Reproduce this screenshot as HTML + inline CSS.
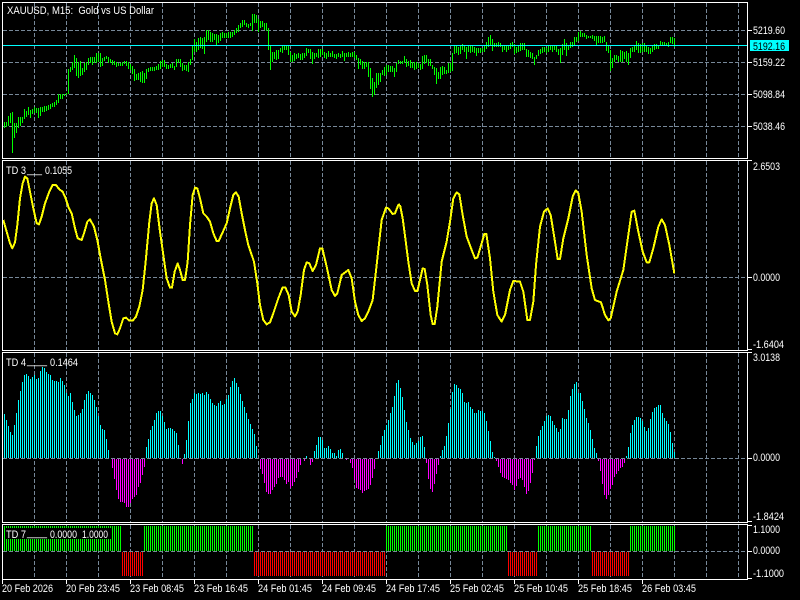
<!DOCTYPE html>
<html>
<head>
<meta charset="utf-8">
<title>XAUUSD, M15</title>
<style>
html,body{margin:0;padding:0;background:#000;width:800px;height:600px;overflow:hidden}
svg{display:block;position:absolute;left:0;top:0}
text{font-family:"Liberation Sans",sans-serif;font-size:11px;fill:#fff;white-space:pre}
</style>
</head>
<body>
<svg width="800" height="600" viewBox="0 0 800 600" xmlns="http://www.w3.org/2000/svg">
<rect width="800" height="600" fill="#000"/>
<path id="grid" stroke="#778899" stroke-width="1" stroke-dasharray="4 2" fill="none" shape-rendering="crispEdges"/>
<path id="histp" fill="none" shape-rendering="crispEdges" stroke="#00ffff" stroke-width="1"/>
<path id="histn" fill="none" shape-rendering="crispEdges" stroke="#ff00ff" stroke-width="1"/>
<path id="sg" fill="none" shape-rendering="crispEdges" stroke="#00ff00" stroke-width="1"/>
<path id="sr" fill="none" shape-rendering="crispEdges" stroke="#ff0000" stroke-width="1"/>
<path id="price" fill="none" shape-rendering="crispEdges" stroke="#00ff00" stroke-width="1"/>
<path d="M3 45.5H747" stroke="#00ffff" stroke-width="1" shape-rendering="crispEdges"/>
<g fill="none" stroke="#ffff00" stroke-width="6" stroke-linejoin="round" shape-rendering="crispEdges">
<polyline transform="translate(0 155) scale(.33333)" points="10,195 20,230 30,265 37,280 45,262 52,210 60,130 68,85 75,65 82,70 90,110 100,160 110,205 117,208 125,185 135,145 148,110 158,90 168,90 178,103 188,110 197,130 205,155 215,175 225,220 233,250 245,255 252,235 262,200 270,193 282,215 292,255 302,310 315,375 325,440 335,500 345,535 352,538 360,520 370,490 378,488 388,497 398,497 408,485 418,455 428,405 437,320 448,200 455,145 462,130 470,150 480,230 490,300 500,370 510,398 516,398 524,350 533,325 540,345 548,375 555,375 563,320 570,210 578,120 585,98 592,100 600,130 610,175 620,185 630,200 640,235 650,258 656,258 668,232 680,205 690,160 700,120 708,112 716,125 725,175 735,225 745,270 762,320 772,385 780,450 790,495 800,508 810,502 820,475 835,430 848,397 856,397 866,420 875,470 885,484 893,470 902,420 912,345 920,322 928,325 938,348 948,330 960,280 967,280 980,335 995,405 1005,423 1012,415 1025,360 1045,345 1055,370 1065,440 1075,480 1085,498 1095,490 1105,470 1118,435 1130,330 1145,195 1158,158 1165,160 1178,177 1185,175 1195,150 1200,148"/>
<polyline transform="translate(400 155) scale(.33333)" points="0,150 8,190 16,250 25,320 35,385 45,408 52,408 60,375 68,340 74,342 82,390 92,480 98,507 104,507 112,455 125,320 140,260 150,200 160,130 170,112 178,118 188,180 200,245 215,285 225,310 232,308 245,265 253,237 259,237 270,310 280,410 292,480 305,500 315,480 330,405 340,378 360,380 370,410 382,495 390,495 400,440 408,330 420,215 432,170 443,160 452,180 465,260 473,312 480,312 490,250 505,190 518,125 527,106 535,115 545,170 560,300 575,400 585,435 603,442 615,480 625,496 632,490 650,410 670,345 685,240 695,170 703,167 715,230 728,290 740,322 748,322 760,280 775,215 785,193 795,210 808,270 823,355"/>
</g>
<g fill="none" stroke="#fff" stroke-width="1" shape-rendering="crispEdges">
<rect x="2.5" y="2.5" width="745" height="156"/>
<rect x="2.5" y="160.5" width="745" height="190"/>
<rect x="2.5" y="352.5" width="745" height="170"/>
<rect x="2.5" y="524.5" width="745" height="55"/>
<path d="M747 30.500H752M747 62.500H752M747 94.500H752M747 126.500H752M747 160.500H752M747 277.500H752M747 349.500H752M747 352.500H752M747 458.500H752M747 521.500H752M747 525.500H752M747 551.500H752M747 578.500H752M2.500 579V584M66.500 579V584M130.500 579V584M194.500 579V584M258.500 579V584M322.500 579V584M386.500 579V584M450.500 579V584M514.500 579V584M578.500 579V584M642.500 579V584"/>
</g>
<rect x="750" y="40" width="39" height="11" fill="#00ffff"/>
<rect x="5" y="528" width="106" height="11" fill="#000"/>
<text x="7" y="14" textLength="147" lengthAdjust="spacingAndGlyphs">XAUUSD, M15:  Gold vs US Dollar</text>
<text x="6" y="174" textLength="20" lengthAdjust="spacingAndGlyphs">TD 3</text>
<text x="27" y="173" textLength="15" lengthAdjust="spacingAndGlyphs">___</text>
<text x="45" y="174" textLength="27" lengthAdjust="spacingAndGlyphs">0.1055</text>
<text x="6" y="366" textLength="20" lengthAdjust="spacingAndGlyphs">TD 4</text>
<text x="27" y="364" textLength="20" lengthAdjust="spacingAndGlyphs">____</text>
<text x="50" y="366" textLength="28" lengthAdjust="spacingAndGlyphs">0.1464</text>
<text x="6" y="538" textLength="20" lengthAdjust="spacingAndGlyphs">TD 7</text>
<text x="27" y="536" textLength="20" lengthAdjust="spacingAndGlyphs">____</text>
<text x="50" y="538" textLength="27" lengthAdjust="spacingAndGlyphs">0.0000</text>
<text x="82" y="538" textLength="26" lengthAdjust="spacingAndGlyphs">1.0000</text>
<g>
<text x="753" y="34" textLength="32" lengthAdjust="spacingAndGlyphs">5219.60</text>
<text x="753" y="50" textLength="32" lengthAdjust="spacingAndGlyphs" style="fill:#000">5192.16</text>
<text x="753" y="66" textLength="32" lengthAdjust="spacingAndGlyphs">5159.22</text>
<text x="753" y="98" textLength="32" lengthAdjust="spacingAndGlyphs">5098.84</text>
<text x="753" y="130" textLength="32" lengthAdjust="spacingAndGlyphs">5038.46</text>
<text x="753" y="170" textLength="27" lengthAdjust="spacingAndGlyphs">2.6503</text>
<text x="753" y="281" textLength="27" lengthAdjust="spacingAndGlyphs">0.0000</text>
<text x="753" y="348" textLength="31" lengthAdjust="spacingAndGlyphs">-1.6404</text>
<text x="753" y="361" textLength="27" lengthAdjust="spacingAndGlyphs">3.0138</text>
<text x="753" y="461" textLength="27" lengthAdjust="spacingAndGlyphs">0.0000</text>
<text x="753" y="520" textLength="31" lengthAdjust="spacingAndGlyphs">-1.8424</text>
<text x="753" y="533" textLength="27" lengthAdjust="spacingAndGlyphs">1.1000</text>
<text x="753" y="554" textLength="27" lengthAdjust="spacingAndGlyphs">0.0000</text>
<text x="753" y="577" textLength="31" lengthAdjust="spacingAndGlyphs">-1.1000</text>
</g>
<g>
<text x="2" y="592" textLength="51" lengthAdjust="spacingAndGlyphs">20 Feb 2026</text>
<text x="66" y="592" textLength="54" lengthAdjust="spacingAndGlyphs">20 Feb 23:45</text>
<text x="130" y="592" textLength="54" lengthAdjust="spacingAndGlyphs">23 Feb 08:45</text>
<text x="194" y="592" textLength="54" lengthAdjust="spacingAndGlyphs">23 Feb 16:45</text>
<text x="258" y="592" textLength="54" lengthAdjust="spacingAndGlyphs">24 Feb 01:45</text>
<text x="322" y="592" textLength="54" lengthAdjust="spacingAndGlyphs">24 Feb 09:45</text>
<text x="386" y="592" textLength="54" lengthAdjust="spacingAndGlyphs">24 Feb 17:45</text>
<text x="450" y="592" textLength="54" lengthAdjust="spacingAndGlyphs">25 Feb 02:45</text>
<text x="514" y="592" textLength="54" lengthAdjust="spacingAndGlyphs">25 Feb 10:45</text>
<text x="578" y="592" textLength="54" lengthAdjust="spacingAndGlyphs">25 Feb 18:45</text>
<text x="642" y="592" textLength="54" lengthAdjust="spacingAndGlyphs">26 Feb 03:45</text>
</g>
</svg>
<script>
(function(){
var g='';
var vx=[34,66,98,130,162,194,226,258,290,322,354,386,418,450,482,514,546,578,610,642,674,706,738];
var pn=[[3,158],[161,350],[353,522],[525,579]];
pn.forEach(function(p){vx.forEach(function(x){g+='M'+(x+.5)+' '+p[0]+'V'+p[1];});});
[30,62,94,126,277,458,551].forEach(function(y){g+='M3 '+(y+.5)+'H747';});
document.getElementById('grid').setAttribute('d',g);

var h=[192,210,228,246,255,225,188,150,123,96,76,73,78,86,80,75,88,84,63,50,54,66,72,76,90,92,92,96,84,92,105,128,138,128,155,180,197,195,188,178,150,133,123,128,135,150,172,198,225,237,240,267,300,325,
355,386,420,447,457,457,460,470,470,460,446,440,435,412,400,375,352,
290,268,240,228,210,190,183,183,198,216,238,234,234,238,244,250,285,328,342,312,270,213,158,147,128,132,130,133,130,135,125,132,147,160,165,168,160,153,165,162,148,135,110,92,84,98,110,132,153,170,190,207,222,237,252,288,325,
358,372,400,425,432,432,420,410,403,385,382,382,390,402,395,415,408,395,385,365,345,328,333,318,325,345,335,
302,285,261,261,270,293,293,288,298,310,310,318,300,297,310,328,330,325,340,355,390,413,417,420,430,422,420,418,405,385,357,325,
303,285,257,240,225,210,190,172,138,98,90,
113,140,180,216,240,265,276,285,280,272,261,258,290,340,387,416,425,402,372,345,318,300,287,258,218,177,125,102,105,113,118,128,155,160,157,172,178,188,189,180,183,183,190,213,243,272,307,320,333,350,368,380,385,387,390,398,405,420,407,388,385,390,410,432,422,400,368,330,
287,258,240,228,213,197,195,198,213,225,235,247,237,204,206,208,180,137,117,102,96,128,130,153,178,205,220,240,267,295,310,332,362,402,435,446,435,418,405,382,372,362,353,350,338,318,290,250,225,210,202,200,205,213,232,243,233,208,185,174,172,165,165,190,204,212,222,245,280,305];
var pp='',nn='';
h.forEach(function(v,i){
 var x=4+2*i+.5,y=Math.round(350+v/3);
 if(v<325)pp+='M'+x+' 458V'+y;
 else if(v>325)nn+='M'+x+' 459V'+y;
});
document.getElementById('histp').setAttribute('d',pp);
document.getElementById('histn').setAttribute('d',nn);

var sg='',sr='';
function rng(a,b,green){for(var x=a;x<=b;x+=2){if(green)sg+='M'+(x+.5)+' 526V551';else sr+='M'+(x+.5)+' 552V576';}}
rng(4,120,1);rng(122,142,0);rng(144,252,1);rng(254,384,0);rng(386,506,1);rng(508,536,0);rng(538,590,1);rng(592,628,0);rng(630,674,1);
document.getElementById('sg').setAttribute('d',sg);
document.getElementById('sr').setAttribute('d',sr);

var a=[365,383,365,382,348,378,340,370,337,458,368,415,368,400,352,385,352,378,350,370,328,358,332,350,322,345,330,355,328,342,322,340,325,340,325,355,322,348,320,337,318,335,318,332,316,330,312,328,310,322,307,320,300,315,283,310,283,298,283,296,282,288,278,285,207,282,200,215,185,210,165,205,175,228,185,235,183,228,205,225,190,215,185,210,173,195,172,190,172,195,172,188,160,190,158,185,158,200,175,198,170,182,168,178,170,190,178,190,180,195,183,195,185,200,188,198,188,198,186,198,183,193,183,198,185,208,193,210,197,222,207,243,222,240,220,240,215,245,212,248,220,248,208,238,205,215,200,212,200,212,200,212,197,210,193,210,183,207,180,202,180,200,192,208,195,208,192,205,190,205,197,210,178,200,178,190,178,200,188,213,195,210,195,213,185,215,178,195,137,180,118,155,125,157,115,150,112,145,115,147,112,162,90,125,90,120,95,125,98,125,103,120,103,135,105,130,100,122,97,115,98,115,100,115,97,113,95,115,95,110,90,105,83,100,75,95,70,85,60,80,60,75,68,80,72,85,70,78,43,92,43,68,45,70,58,95,62,85,62,80,68,90,70,92,85,150,135,210,155,187,155,178,150,180,150,178,143,155,135,158,135,150,137,150,137,165,155,185,165,187,160,182,163,178,160,175,162,180,160,180,158,175,143,168,147,160,147,178,155,192,158,178,160,172,148,175,147,170,147,165,155,175,160,178,152,170,158,172,153,170,162,175,162,178,160,172,162,175,152,172,160,182,160,172,155,170,158,170,157,170,155,175,165,180,175,207,178,195,182,208,185,208,185,200,185,230,205,268,235,290,245,285,220,265,220,255,220,245,210,225,200,228,195,225,195,215,198,215,197,215,205,232,190,215,180,192,
183,192,182,193,168,190,178,200,182,198,180,203,185,205,187,210,187,208,188,205,192,210,167,208,165,192,165,190,178,197,178,197,195,208,200,225,205,252,215,237,200,237,198,225,200,222,210,222,190,218,190,215,160,213,137,163,137,160,140,165,137,162,132,150,135,155,140,178,135,155,138,158,137,155,140,160,145,168,145,160,145,158,145,155,137,155,125,147,112,140,105,137,118,152,130,142,130,142,127,142,130,142,135,155,137,150,135,155,137,150,130,148,127,142,132,162,140,158,135,155,130,152,128,150,130,150,147,170,150,172,155,175,160,178,172,195,165,178,150,168,148,162,142,158,142,155,145,158,137,155,137,150,135,155,135,150,137,155,148,165,145,188,132,165,118,150,128,168,135,150,125,143,125,140,110,137,110,125,95,122,92,112,98,112,100,112,105,118,108,115,108,115,105,118,108,122,107,137,108,130,108,128,112,130,108,125,125,152,137,158,150,212,175,205,165,185,165,180,167,185,150,187,152,187,155,178,152,187,160,195,143,175,140,157,135,155,123,150,130,158,132,160,130,155,128,155,135,157,140,163,145,162,137,155,132,150,132,148,135,148,123,135,125,135,127,138,128,135,125,142,112,130,112,132,115,140];
var p='';
for(var i=0;i*2<a.length;i++){
 var x=4+2*i+.5;
 p+='M'+x+' '+Math.round(a[2*i]/3)+'V'+Math.round(a[2*i+1]/3);
}
document.getElementById('price').setAttribute('d',p);
})();
</script>
</body>
</html>
